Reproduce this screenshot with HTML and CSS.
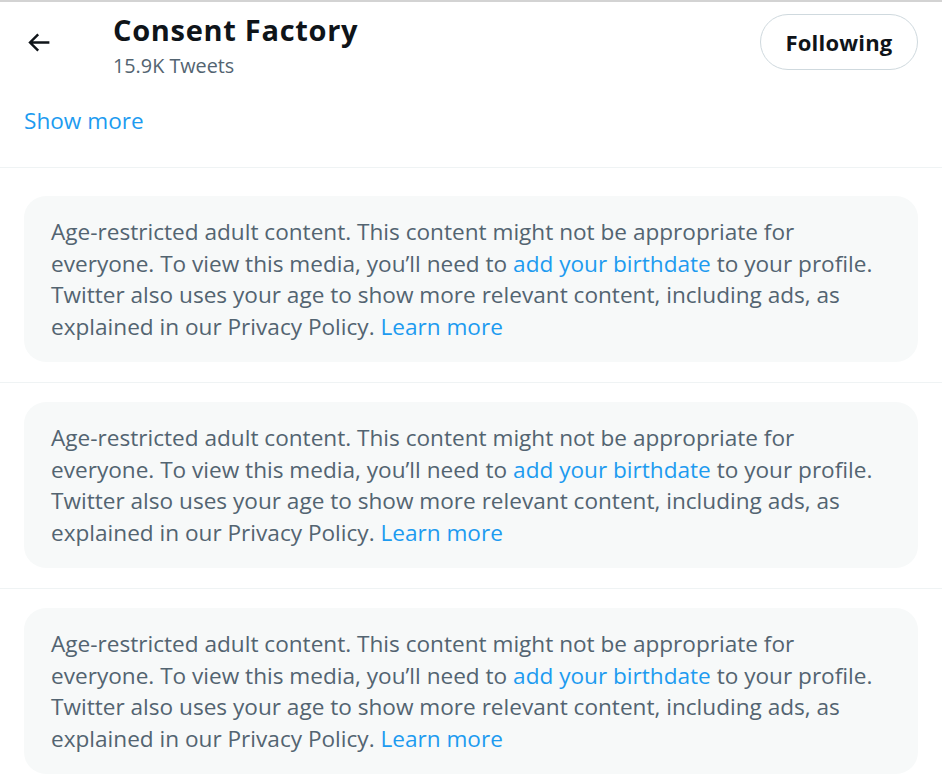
FILE: index.html
```html
<!DOCTYPE html>
<html>
<head>
<meta charset="utf-8">
<link rel="stylesheet" href="styles.css">
</head>
<body>
<div class="page">
  <header class="header">
    <div class="back">
      <svg viewBox="0 0 24 24" class="back-icon"><path d="M7.414 13l5.043 5.04-1.414 1.42L3.586 12l7.457-7.46 1.414 1.42L7.414 11H21v2H7.414z"/></svg>
    </div>
    <div class="titles">
      <div class="title">Consent Factory</div>
      <div class="subtitle">15.9K Tweets</div>
    </div>
    <div class="follow">Following</div>
  </header>
  <div class="showmore"><span class="link">Show more</span></div>
  <section class="item first">
    <div class="card">Age-restricted adult content. This content might not be appropriate for everyone. To view this media, you’ll need to <span class="link">add your birthdate</span> to your profile. Twitter also uses your age to show more relevant content, including ads, as explained in our Privacy Policy. <span class="link">Learn more</span></div>
  </section>
  <section class="item">
    <div class="card">Age-restricted adult content. This content might not be appropriate for everyone. To view this media, you’ll need to <span class="link">add your birthdate</span> to your profile. Twitter also uses your age to show more relevant content, including ads, as explained in our Privacy Policy. <span class="link">Learn more</span></div>
  </section>
  <section class="item last">
    <div class="card">Age-restricted adult content. This content might not be appropriate for everyone. To view this media, you’ll need to <span class="link">add your birthdate</span> to your profile. Twitter also uses your age to show more relevant content, including ads, as explained in our Privacy Policy. <span class="link">Learn more</span></div>
  </section>
</div>
</body>
</html>
```
FILE: styles.css
```css
html, body {
  margin: 0;
  padding: 0;
  background: #ffffff;
}
body {
  font-family: "Open Sans", "Noto Sans", sans-serif;
  color: #0f1419;
  overflow: hidden;
}
.page {
  border-top: 2px solid #d3d3d3;
  width: 942px;
}
.header {
  display: flex;
  align-items: flex-start;
  height: 62px;
  padding: 12px 24px 0 28px;
}
.back {
  width: 85px;
  padding-top: 14px;
}
.back-icon {
  width: 29px;
  height: 29px;
  fill: #0f1419;
  display: block;
  margin-left: -4px;
}
.titles {
  flex: 1;
}
.title {
  font-size: 29px;
  font-weight: 700;
  line-height: 36px;
  letter-spacing: 0.7px;
  margin-top: -2px;
}
.subtitle {
  font-size: 19.8px;
  line-height: 28px;
  color: #536471;
  margin-top: 4px;
}
.follow {
  box-sizing: border-box;
  height: 56px;
  width: 158px;
  border: 1px solid #cfd9de;
  border-radius: 28px;
  display: flex;
  align-items: center;
  justify-content: center;
  font-size: 22px;
  font-weight: 700;
  letter-spacing: 0.2px;
}
.showmore {
  margin-top: 29px;
  padding: 0 24px 31px;
  font-size: 22.6px;
  line-height: 31px;
  border-bottom: 1px solid #eff3f4;
}
.link {
  color: #1d9bf0;
}
.item {
  padding: 19px 24px 20px;
  border-bottom: 1px solid #eff3f4;
}
.item.first {
  padding-top: 28px;
}
.item.last {
  border-bottom: none;
}
.card {
  background: #f7f9f9;
  border-radius: 22px;
  padding: 20px 27px;
  font-size: 22.6px;
  line-height: 31.5px;
  color: #536471;
}
```
